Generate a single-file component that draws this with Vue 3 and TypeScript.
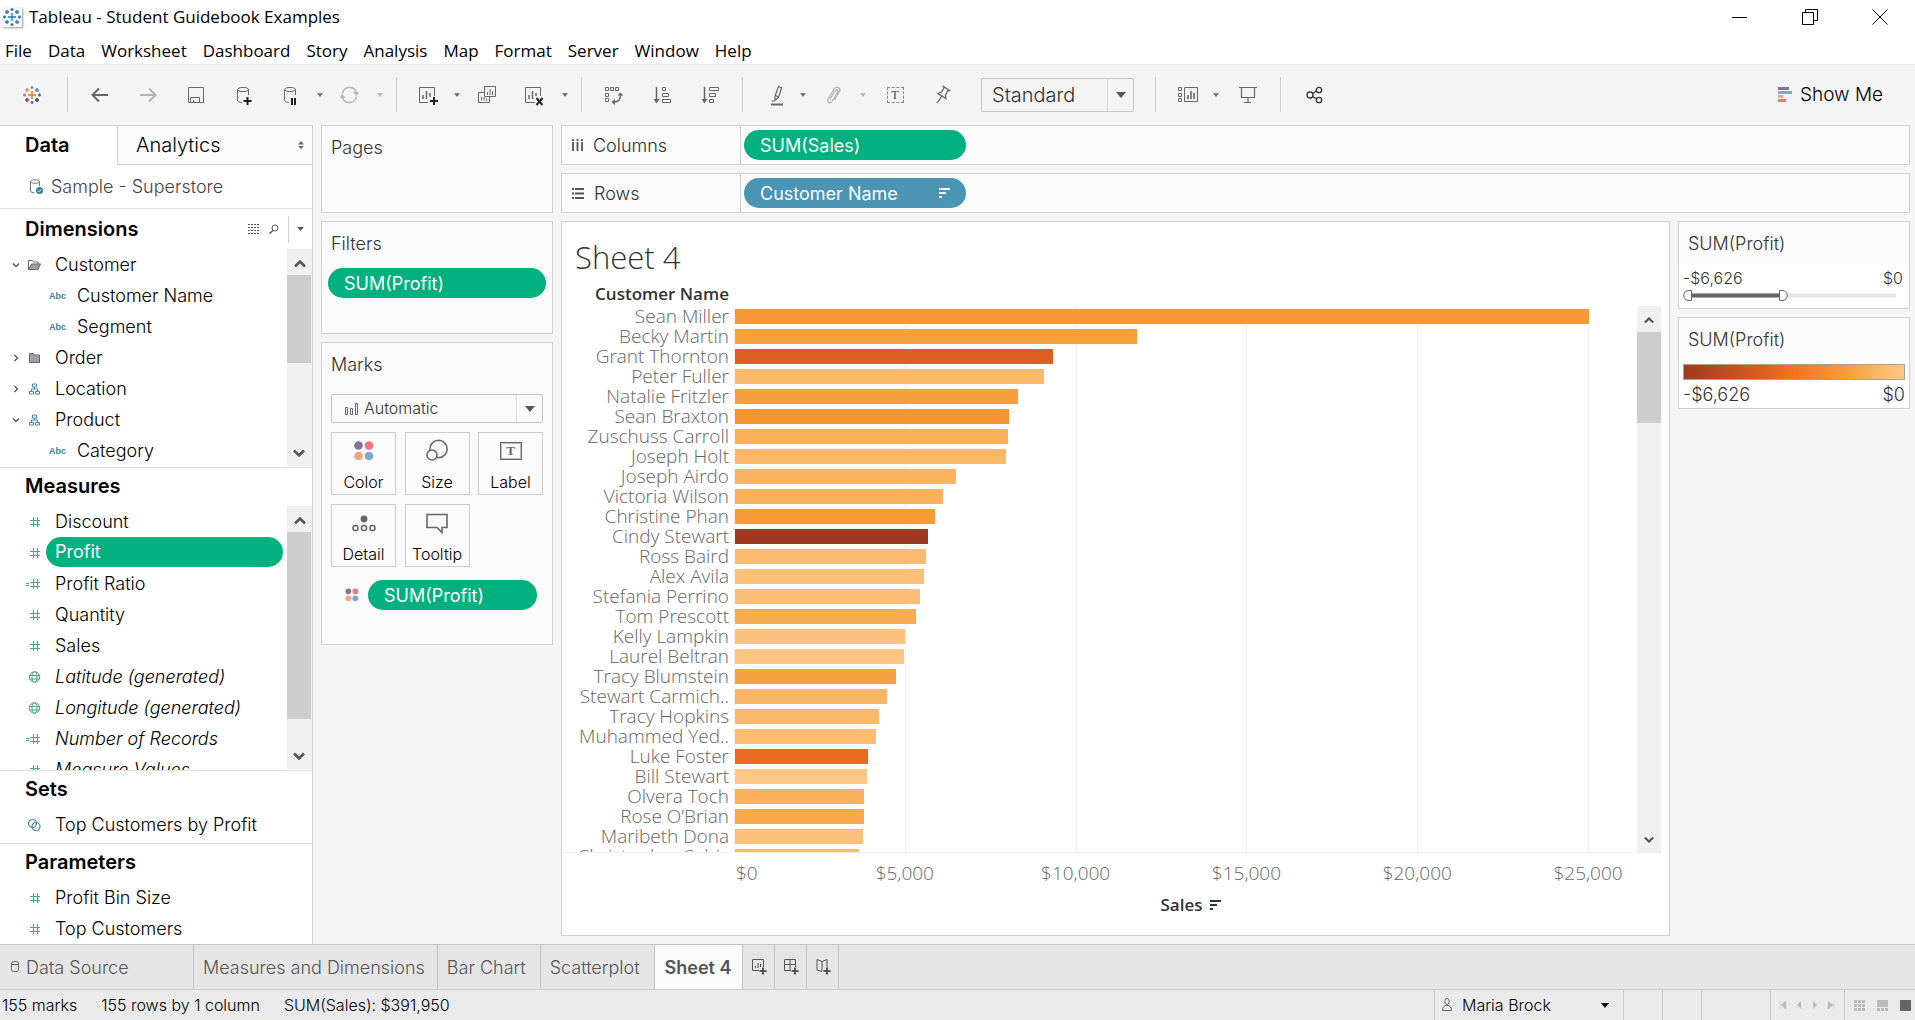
<script setup lang="ts">
import { ref } from 'vue'

interface Field { icon: string; label: string; open?: boolean; group?: boolean; child?: boolean; italic?: boolean; active?: boolean }
interface Row { name: string; sales: number; color: string }
interface Tool { icon?: string; label?: string; kind: 'tool' | 'near' | 'caret' | 'sep'; off?: boolean }

const menus = ['File', 'Data', 'Worksheet', 'Dashboard', 'Story', 'Analysis', 'Map', 'Format', 'Server', 'Window', 'Help']

const toolsLeft: Tool[] = [
  { kind: 'tool', icon: 'back', label: 'Undo' },
  { kind: 'tool', icon: 'forward', label: 'Redo', off: true },
  { kind: 'tool', icon: 'save', label: 'Save' },
  { kind: 'tool', icon: 'newdata', label: 'New data source' },
  { kind: 'near', icon: 'pause', label: 'Pause updates' },
  { kind: 'caret', label: 'Update options' },
  { kind: 'near', icon: 'refresh', label: 'Run update', off: true },
  { kind: 'caret', label: 'Run options', off: true },
  { kind: 'sep' },
  { kind: 'near', icon: 'newsheet', label: 'New worksheet' },
  { kind: 'caret', label: 'New options' },
  { kind: 'near', icon: 'duplicate', label: 'Duplicate' },
  { kind: 'tool', icon: 'clear', label: 'Clear sheet' },
  { kind: 'caret', label: 'Clear options' },
  { kind: 'sep' },
  { kind: 'tool', icon: 'swap', label: 'Swap rows and columns' },
  { kind: 'tool', icon: 'asc', label: 'Sort ascending' },
  { kind: 'tool', icon: 'desc', label: 'Sort descending' },
  { kind: 'sep' },
  { kind: 'near', icon: 'pen', label: 'Highlight' },
  { kind: 'caret', label: 'Highlight options' },
  { kind: 'near', icon: 'clip', label: 'Group members', off: true },
  { kind: 'caret', label: 'Group options', off: true },
  { kind: 'tool', icon: 'labels', label: 'Show mark labels' },
  { kind: 'tool', icon: 'pin', label: 'Fix axes' }
]
const toolsRight: Tool[] = [
  { kind: 'sep' },
  { kind: 'near', icon: 'cards', label: 'Show or hide cards' },
  { kind: 'caret', label: 'Card options' },
  { kind: 'tool', icon: 'present', label: 'Presentation mode' },
  { kind: 'sep' },
  { kind: 'tool', icon: 'share', label: 'Share' }
]

const dimensions: Field[] = [
  { icon: 'folderopen', label: 'Customer', group: true, open: true },
  { icon: 'abc', label: 'Customer Name', child: true },
  { icon: 'abc', label: 'Segment', child: true },
  { icon: 'folder', label: 'Order', group: true },
  { icon: 'tree', label: 'Location', group: true },
  { icon: 'tree', label: 'Product', group: true, open: true },
  { icon: 'abc', label: 'Category', child: true }
]
const measures: Field[] = [
  { icon: 'hash', label: 'Discount' },
  { icon: 'hash', label: 'Profit', active: true },
  { icon: 'calc', label: 'Profit Ratio' },
  { icon: 'hash', label: 'Quantity' },
  { icon: 'hash', label: 'Sales' },
  { icon: 'globe', label: 'Latitude (generated)', italic: true },
  { icon: 'globe', label: 'Longitude (generated)', italic: true },
  { icon: 'calc', label: 'Number of Records', italic: true },
  { icon: 'hash', label: 'Measure Values', italic: true }
]
const parameters: Field[] = [
  { icon: 'hash', label: 'Profit Bin Size' },
  { icon: 'hash', label: 'Top Customers' }
]

const markButtons = [
  { icon: 'm-color', label: 'Color' },
  { icon: 'm-size', label: 'Size' },
  { icon: 'm-label', label: 'Label' },
  { icon: 'm-detail', label: 'Detail' },
  { icon: 'm-tooltip', label: 'Tooltip' }
]

const axisMax = 26315
const ticks = [0, 5000, 10000, 15000, 20000, 25000]
const pct = (v: number): string => `${(v / axisMax) * 100}%`
const money = (v: number): string => `$${v.toLocaleString('en-US')}`

const rows: Row[] = [
  { name: 'Sean Miller', sales: 25020, color: '#f59938' },
  { name: 'Becky Martin', sales: 11770, color: '#f7a13e' },
  { name: 'Grant Thornton', sales: 9310, color: '#dd5f1f' },
  { name: 'Peter Fuller', sales: 9045, color: '#fcba6b' },
  { name: 'Natalie Fritzler', sales: 8285, color: '#f69f3e' },
  { name: 'Sean Braxton', sales: 8020, color: '#f69434' },
  { name: 'Zuschuss Carroll', sales: 7990, color: '#f9b059' },
  { name: 'Joseph Holt', sales: 7932, color: '#fcb868' },
  { name: 'Joseph Airdo', sales: 6470, color: '#f9b460' },
  { name: 'Victoria Wilson', sales: 6090, color: '#f9b05b' },
  { name: 'Christine Phan', sales: 5855, color: '#f69a38' },
  { name: 'Cindy Stewart', sales: 5650, color: '#9e3a22' },
  { name: 'Ross Baird', sales: 5590, color: '#fcbb71' },
  { name: 'Alex Avila', sales: 5532, color: '#fdc07a' },
  { name: 'Stefania Perrino', sales: 5415, color: '#fcbe77' },
  { name: 'Tom Prescott', sales: 5298, color: '#f7ac50' },
  { name: 'Kelly Lampkin', sales: 4976, color: '#fdc27d' },
  { name: 'Laurel Beltran', sales: 4947, color: '#fec583' },
  { name: 'Tracy Blumstein', sales: 4713, color: '#f6a240' },
  { name: 'Stewart Carmich..', sales: 4449, color: '#fbb566' },
  { name: 'Tracy Hopkins', sales: 4215, color: '#fcb96c' },
  { name: 'Muhammed Yed..', sales: 4127, color: '#fdbd73' },
  { name: 'Luke Foster', sales: 3893, color: '#ea6a22' },
  { name: 'Bill Stewart', sales: 3864, color: '#ffc685' },
  { name: 'Olvera Toch', sales: 3776, color: '#fbb05b' },
  { name: 'Rose O’Brian', sales: 3776, color: '#f8a94b' },
  { name: 'Maribeth Dona', sales: 3747, color: '#fdc07b' },
  { name: 'Christopher Sabi..', sales: 3630, color: '#fcbb6f' }
]

const fit = ref('Standard')
const markType = ref('Automatic')
</script>

<template>
  <div class="app">
    <svg class="sprite" width="0" height="0" aria-hidden="true">
      <symbol id="logo-blue" viewBox="0 0 20 20">
        <path d="M10 6v8M6 10h8M10 1v3M8.500 2.500h3M10 16v3M8.500 17.500h3M2.500 8.500v3M1 10h3M17.500 8.500v3M16 10h3M5 3v4M3 5h4M15 3v4M13 5h4M5 13v4M3 15h4M15 13v4M13 15h4" fill="none" stroke="#2478ae" stroke-width="1.300" />
      </symbol>
      <symbol id="logo" viewBox="0 0 20 20">
        <g fill="none" stroke-width="1.500">
          <path d="M10 6v8M6 10h8" stroke="#e8762d" />
          <path d="M10 1v3M8.500 2.500h3M2.500 8.500v3M1 10h3" stroke="#7099a6" />
          <path d="M10 16v3M8.500 17.500h3M17.500 8.500v3M16 10h3" stroke="#5b6591" />
          <path d="M5 3v4M3 5h4" stroke="#eb912c" />
          <path d="M15 3v4M13 5h4" stroke="#59879b" />
          <path d="M5 13v4M3 15h4" stroke="#c72035" />
          <path d="M15 13v4M13 15h4" stroke="#1f447e" />
        </g>
      </symbol>
      <symbol id="back" viewBox="0 0 24 24"><path d="M11 5.500 4.500 12l6.500 6.500M5 12h15" fill="none" stroke="currentColor" stroke-width="2" /></symbol>
      <symbol id="forward" viewBox="0 0 24 24"><path d="M13 5.500 19.500 12 13 18.500M19 12H4" fill="none" stroke="currentColor" stroke-width="2" /></symbol>
      <symbol id="save" viewBox="0 0 24 24"><path d="M4.500 4.500h15v15h-15zM6.500 19v-4.500h9V19M9.500 19v-2" fill="none" stroke="currentColor" /></symbol>
      <symbol id="newdata" viewBox="0 0 24 24">
        <path d="M5.500 6.500c0-2.700 11-2.700 11 0s-11 2.700-11 0zV17c0 1.300 2 2.500 4.500 2.500M16.500 6.500V12" fill="none" stroke="currentColor" />
        <path d="M15.500 14v8M11.500 18h8" stroke="#222" stroke-width="2" />
      </symbol>
      <symbol id="pause" viewBox="0 0 24 24">
        <path d="M6.500 6.500c0-2.700 11-2.700 11 0s-11 2.700-11 0zV17c0 1.300 2 2.500 4.500 2.500M17.500 6.500V12" fill="none" stroke="currentColor" />
        <path d="M14 15v7M17 15v7" stroke="#222" stroke-width="2" />
      </symbol>
      <symbol id="refresh" viewBox="0 0 24 24">
        <path d="M4.500 10.500A7.200 7.200 0 0 1 18.500 9.500M18.500 13.500A7.200 7.200 0 0 1 4.500 14.500" fill="none" stroke="currentColor" stroke-width="1.500" />
        <path d="M15 9h6l-2 4zM8 15H2l2-4z" fill="currentColor" />
      </symbol>
      <symbol id="newsheet" viewBox="0 0 24 24">
        <path d="M13 19.500H4.500v-15h15V13" fill="none" stroke="currentColor" />
        <path d="M8 16v-4M11.500 16V8M15 14v-4" stroke="currentColor" stroke-width="1.500" />
        <path d="M19 14v8M15 18h8" stroke="#222" stroke-width="2" />
      </symbol>
      <symbol id="clear" viewBox="0 0 24 24">
        <path d="M14 19.500H4.500v-15h15V13" fill="none" stroke="currentColor" />
        <path d="M8 16v-4M11.500 16V8M15 13v-3" stroke="currentColor" stroke-width="1.500" />
        <path d="M15.500 15 21.500 22M21.500 15 15.500 22" stroke="#222" stroke-width="2" />
      </symbol>
      <symbol id="duplicate" viewBox="0 0 24 24">
        <path d="M9.500 3.500h11v10h-11zM9 9.500H3.500v10h11V14M12.500 12V9M15 12V6M17.500 12V8M6.500 17.500v-3.500M9 17.500V14M11.500 17.500v-2" fill="none" stroke="currentColor" />
      </symbol>
      <symbol id="swap" viewBox="0 0 24 24">
        <path d="M3.500 4.500h3v3h-3zM8.500 4.500h3v3h-3zM13.500 4.500h3v3h-3zM3.500 10.500h3v3h-3zM3.500 15.500h3v3h-3z" fill="none" stroke="currentColor" />
        <path d="M12 19c4.500 0 6.500-2 6.500-7" fill="none" stroke="currentColor" stroke-width="1.500" />
        <path d="M15.500 12.500l3-3 3 3zM13 16l-3.500 3 3.500 3z" fill="currentColor" />
      </symbol>
      <symbol id="asc" viewBox="0 0 24 24">
        <path d="M6.500 4v14" stroke="currentColor" stroke-width="1.500" /><path d="M3.500 16h6l-3 4.500z" fill="currentColor" />
        <path d="M12.500 4.500h3v3h-3zM12.500 10.500h6v3h-6zM12.500 16.500h8v3h-8z" fill="none" stroke="currentColor" />
      </symbol>
      <symbol id="desc" viewBox="0 0 24 24">
        <path d="M6.500 4v14" stroke="currentColor" stroke-width="1.500" /><path d="M3.500 16h6l-3 4.500z" fill="currentColor" />
        <path d="M11.500 4.500h9v3h-9zM11.500 10.500h6v3h-6zM11.500 16.500h4v3h-4z" fill="none" stroke="currentColor" />
      </symbol>
      <symbol id="pen" viewBox="0 0 24 24">
        <path d="M17.500 3.500l3 1.500-3 9.500-3.500 3v-4.500zM14.500 12.500l3 1.500" fill="none" stroke="currentColor" stroke-width="1.200" />
        <path d="M10 21.500h12" stroke="currentColor" stroke-width="2" /><path d="M10.500 18h3" stroke="currentColor" />
      </symbol>
      <symbol id="clip" viewBox="0 0 24 24"><path d="M9 16l5.500-8.500c1-1.500 3.200 0 2.300 1.500L11 18.500C9.500 21 5.500 19 7 16l6.500-10.500c2-3 7-.500 5 3L13.500 17" fill="none" stroke="currentColor" stroke-width="1.300" /></symbol>
      <symbol id="pin" viewBox="0 0 24 24"><path d="M12.500 3.500l6 4-2 .5-2 4 .5 3.500-8-5 3.500-1.500 2.500-4zM10.500 13.500 6 20" fill="none" stroke="currentColor" stroke-width="1.300" /></symbol>
      <symbol id="cards" viewBox="0 0 24 24">
        <path d="M4.500 4.500h3v3h-3zM4.500 10.500h3v3h-3zM4.500 15.500h3v3h-3zM10.500 4.500h13v14h-13z" fill="none" stroke="currentColor" />
        <path d="M14 16v-4M17 16V8M20 16v-6" stroke="currentColor" stroke-width="1.600" />
      </symbol>
      <symbol id="present" viewBox="0 0 24 24"><path d="M3 4.500h18M5.500 4.500v10h13v-10M12 15v5M8 19.500h7" fill="none" stroke="currentColor" stroke-width="1.200" /></symbol>
      <symbol id="share" viewBox="0 0 24 24"><g fill="none" stroke="#333" stroke-width="1.300"><circle cx="9" cy="12" r="3" /><circle cx="18" cy="7" r="2.700" /><circle cx="18" cy="17" r="2.700" /><path d="M11.600 10.500 15.500 8.300M11.600 13.500l3.900 2.300" /></g></symbol>
      <symbol id="hash" viewBox="0 0 16 16"><path d="M8.500 3v10M12.500 3v10M5 6.500h10M5 10.500h10" stroke="#4ba584" /></symbol>
      <symbol id="calc" viewBox="0 0 16 16"><path d="M8.500 3v10M12.500 3v10M5 6.500h10M5 10.500h10M1 7.500h3M1 9.500h3" stroke="#4ba584" /></symbol>
      <symbol id="globe" viewBox="0 0 16 16"><g fill="none" stroke="#4ba584"><circle cx="9.500" cy="8" r="5.200" /><ellipse cx="9.500" cy="8" rx="2.500" ry="5.200" /><path d="M4.500 6.500h10M4.500 10h10" /></g></symbol>
      <symbol id="folder" viewBox="0 0 16 16"><path d="M4.500 12.500v-9h4l1 1.500h5v7.500z" fill="#9aa1ab" stroke="#666" /></symbol>
      <symbol id="folderopen" viewBox="0 0 16 16"><path d="M3.500 12.500v-9h4l1 1.500h4.500v2" fill="none" stroke="#666" /><path d="M3.500 12.500l3-5.500h9l-2.500 5.500z" fill="#9aa1ab" stroke="#666" /></symbol>
      <symbol id="tree" viewBox="0 0 16 16"><path d="M7.500 3h4v3h-4zM4.500 10.500h4v2.500h-4zM10.500 10.500h4v2.500h-4zM9.500 6v2M6.500 10V8h6v2" fill="none" stroke="#4a87a3" /></symbol>
      <symbol id="set" viewBox="0 0 16 16"><g fill="none" stroke="#4a87a3" stroke-width="1.200"><circle cx="7.500" cy="6.500" r="4" /><circle cx="11" cy="9.500" r="4" /></g></symbol>
      <symbol id="source" viewBox="0 0 16 18"><path d="M2.500 3.500c0-2.400 9-2.400 9 0s-9 2.400-9 0zV13c0 1 2 1.800 4 1.800M11.500 3.500V8" fill="none" stroke="#777" /><circle cx="11.500" cy="12.500" r="3.500" fill="#3e7f9e" /><path d="M10 12.500l1.200 1.200 2-2.200" fill="none" stroke="#fff" /></symbol>
      <symbol id="cyl" viewBox="0 0 10 14"><rect x="1.500" y="1.500" width="7" height="10" rx="2" fill="none" stroke="#666" /><path d="M1.500 4.500h7" stroke="#666" /></symbol>
      <symbol id="down" viewBox="0 0 10 6"><path d="M0 0h10L5 6z" fill="currentColor" /></symbol>
      <symbol id="chev" viewBox="0 0 12 8"><path d="M1 6.500 6 1.500l5 5" fill="none" stroke="currentColor" stroke-width="2.600" /></symbol>
      <symbol id="twist" viewBox="0 0 8 8"><path d="M2.500 1 5.500 4l-3 3" fill="none" stroke="#555" stroke-width="1.400" /></symbol>
      <symbol id="grid" viewBox="0 0 12 10"><path d="M0 .5h12M0 3.500h12M0 6.500h12M0 9.500h12" stroke="#555" stroke-dasharray="2 1" /></symbol>
      <symbol id="find" viewBox="0 0 10 10"><circle cx="6" cy="4" r="3" fill="none" stroke="#555" /><path d="M4 6.500.5 9.500" stroke="#555" stroke-width="1.500" /></symbol>
      <symbol id="sorted" viewBox="0 0 11 10"><path d="M0 1h11M0 5h7M0 9h3" stroke="currentColor" stroke-width="2" /></symbol>
      <symbol id="columns" viewBox="0 0 11 12"><path d="M1 0v2M5.500 0v2M10 0v2M1 3v9M5.500 3v9M10 3v9" stroke="#555" stroke-width="1.800" /></symbol>
      <symbol id="rows" viewBox="0 0 12 11"><path d="M0 1h2M0 5.500h2M0 10h2M3 1h9M3 5.500h9M3 10h9" stroke="#555" stroke-width="1.800" /></symbol>
      <symbol id="bars" viewBox="0 0 14 12"><path d="M.5 4.500h2v7h-2zM5.500 5.500h2v6h-2zM10.500.5h2v11h-2z" fill="none" stroke="#666" /></symbol>
      <symbol id="m-color" viewBox="0 0 24 24"><circle cx="6.500" cy="6.500" r="4.300" fill="#83719a" /><circle cx="17" cy="6.500" r="4.300" fill="#f76f82" /><circle cx="6.500" cy="17" r="4.300" fill="#f2a67c" /><circle cx="17" cy="17" r="4.300" fill="#82a5ce" /></symbol>
      <symbol id="m-size" viewBox="0 0 24 24"><g fill="#fafafa" stroke="#666" stroke-width="1.500"><circle cx="13.500" cy="10" r="8.700" /><circle cx="7" cy="16" r="5" /></g></symbol>
      <symbol id="m-detail" viewBox="0 0 24 24"><circle cx="12" cy="8" r="3.400" fill="#666" /><g fill="none" stroke="#666" stroke-width="1.500"><circle cx="3.500" cy="17" r="2.600" /><circle cx="12" cy="17" r="2.600" /><circle cx="20.500" cy="17" r="2.600" /></g></symbol>
      <symbol id="m-tooltip" viewBox="0 0 24 24"><path d="M2 3.500h20v13h-5v5l-5-5H2z" fill="none" stroke="#666" stroke-width="1.600" /></symbol>
      <symbol id="addsheet" viewBox="0 0 18 18"><path d="M9 12.500H2.500v-11h11V9M5.500 10V8M8 10V5M10.500 9V6" fill="none" stroke="#555" /><path d="M13 9.500v7M9.500 13h7" stroke="#555" stroke-width="2" /></symbol>
      <symbol id="adddash" viewBox="0 0 18 18"><path d="M9 12.500H2.500v-11h11V9M2.500 6.500h11M8 1.500v11" fill="none" stroke="#555" /><path d="M13 9.500v7M9.500 13h7" stroke="#555" stroke-width="2" /></symbol>
      <symbol id="addstory" viewBox="0 0 18 18"><path d="M8 13.500l-5-1.500v-10.500L8 3.500l5-2V9M8 3.500V13" fill="none" stroke="#555" /><path d="M13 9.500v7M9.500 13h7" stroke="#555" stroke-width="2" /></symbol>
      <symbol id="person" viewBox="0 0 12 14"><g fill="none" stroke="#666"><ellipse cx="6" cy="3.500" rx="2.200" ry="3" /><path d="M1.500 12.500c0-7 9-7 9 0z" /></g></symbol>
    </svg>

    <header class="titlebar">
      <svg class="appicon"><use href="#logo-blue" /></svg>
      <h1>Tableau - Student Guidebook Examples</h1>
      <div class="winbtns">
        <button aria-label="Minimize"><svg width="16" height="16"><path d="M0 8.500h15" stroke="#000" /></svg></button>
        <button aria-label="Restore"><svg width="16" height="16"><path d="M.5 3.500h11v12H.5zM3.500 3V.5h12v11H12" fill="none" stroke="#000" /></svg></button>
        <button aria-label="Close"><svg width="16" height="16"><path d="M.5.500l15 15M15.500.500l-15 15" stroke="#000" /></svg></button>
      </div>
    </header>

    <nav class="menubar"><button v-for="m in menus" :key="m">{{ m }}</button></nav>

    <div class="toolbar">
      <button class="tool home" aria-label="Start page"><svg width="20" height="20"><use href="#logo" /></svg></button>
      <span class="sep first"></span>
      <template v-for="(t, i) in toolsLeft" :key="i">
        <span v-if="t.kind === 'sep'" class="sep"></span>
        <button v-else :class="[t.kind, { off: t.off }]" :aria-label="t.label">
          <span v-if="t.icon === 'labels'" class="tbox">T</span>
          <svg v-else-if="t.icon" width="24" height="24"><use :href="'#' + t.icon" /></svg>
          <svg v-else width="6" height="4"><use href="#down" /></svg>
        </button>
      </template>
      <div class="combo fit">
        <select v-model="fit" aria-label="Fit"><option>Standard</option><option>Fit Width</option><option>Entire View</option></select>
        <span class="arrow"><svg width="10" height="6"><use href="#down" /></svg></span>
      </div>
      <template v-for="(t, i) in toolsRight" :key="i">
        <span v-if="t.kind === 'sep'" class="sep"></span>
        <button v-else :class="t.kind" :aria-label="t.label">
          <svg v-if="t.icon" width="24" height="24"><use :href="'#' + t.icon" /></svg>
          <svg v-else width="6" height="4"><use href="#down" /></svg>
        </button>
      </template>
      <button class="showme">
        <svg width="14" height="16"><path d="M0 1.500h11" stroke="#83719a" stroke-width="3" /><path d="M0 5.500h14" stroke="#82a5ce" stroke-width="3" /><path d="M0 9.500h5" stroke="#f2a67c" stroke-width="3" /><path d="M0 13.500h8" stroke="#f76f82" stroke-width="3" /></svg>
        Show Me
      </button>
    </div>

    <div class="body">
      <aside class="side">
        <div class="sidetabs">
          <button class="on">Data</button>
          <button class="off">Analytics<svg width="6" height="8"><path d="M0 3.500h6L3 0zM0 5h6L3 8z" fill="#667" /></svg></button>
        </div>
        <div class="datasource"><svg width="16" height="18"><use href="#source" /></svg>Sample - Superstore</div>

        <section class="dims">
          <header>
            <h2>Dimensions</h2>
            <button aria-label="View data"><svg width="12" height="10"><use href="#grid" /></svg></button>
            <button aria-label="Find field"><svg width="10" height="10"><use href="#find" /></svg></button>
            <button class="more" aria-label="Data pane menu"><svg width="7" height="4"><use href="#down" /></svg></button>
          </header>
          <div class="scroller">
            <ul>
              <li v-for="f in dimensions" :key="f.label" :class="{ child: f.child }">
                <svg v-if="f.group" class="twist" :class="{ open: f.open }" width="8" height="8"><use href="#twist" /></svg>
                <span v-if="f.icon === 'abc'" class="abc">Abc</span>
                <svg v-else class="ficon" width="16" height="16"><use :href="'#' + f.icon" /></svg>
                <span class="fname">{{ f.label }}</span>
              </li>
            </ul>
            <div class="sbar">
              <button aria-label="Scroll up"><svg width="12" height="8"><use href="#chev" /></svg></button>
              <i class="thumb short"></i>
              <button class="dn" aria-label="Scroll down"><svg width="12" height="8"><use href="#chev" /></svg></button>
            </div>
          </div>
        </section>

        <section class="meas">
          <header><h2>Measures</h2></header>
          <div class="scroller">
            <ul>
              <li v-for="f in measures" :key="f.label" :class="{ italic: f.italic, active: f.active }">
                <svg class="ficon" width="16" height="16"><use :href="'#' + f.icon" /></svg>
                <span class="fname">{{ f.label }}</span>
              </li>
            </ul>
            <div class="sbar">
              <button aria-label="Scroll up"><svg width="12" height="8"><use href="#chev" /></svg></button>
              <i class="thumb long"></i>
              <button class="dn" aria-label="Scroll down"><svg width="12" height="8"><use href="#chev" /></svg></button>
            </div>
          </div>
        </section>

        <section class="sets">
          <header><h2>Sets</h2></header>
          <ul><li><svg class="ficon" width="16" height="16"><use href="#set" /></svg><span class="fname">Top Customers by Profit</span></li></ul>
        </section>

        <section class="params">
          <header><h2>Parameters</h2></header>
          <ul>
            <li v-for="f in parameters" :key="f.label"><svg class="ficon" width="16" height="16"><use :href="'#' + f.icon" /></svg><span class="fname">{{ f.label }}</span></li>
          </ul>
        </section>
      </aside>

      <div class="cards">
        <section class="card pages"><h3>Pages</h3></section>
        <section class="card filters">
          <h3>Filters</h3>
          <button class="pill green">SUM(Profit)</button>
        </section>
        <section class="card marks">
          <h3>Marks</h3>
          <div class="combo type">
            <svg class="bars" width="14" height="12"><use href="#bars" /></svg>
            <select v-model="markType" aria-label="Mark type"><option>Automatic</option><option>Bar</option><option>Line</option></select>
            <span class="arrow"><svg width="10" height="6"><use href="#down" /></svg></span>
          </div>
          <div class="markgrid">
            <button v-for="b in markButtons" :key="b.label">
              <span v-if="b.icon === 'm-label'" class="tbox solid">T</span>
              <svg v-else width="24" height="24"><use :href="'#' + b.icon" /></svg>
              <span>{{ b.label }}</span>
            </button>
          </div>
          <div class="encoded">
            <svg width="16" height="16"><use href="#m-color" /></svg>
            <button class="pill green">SUM(Profit)</button>
          </div>
        </section>
      </div>

      <main class="work">
        <div class="shelf">
          <span class="shelfname"><svg width="11" height="12"><use href="#columns" /></svg>Columns</span>
          <button class="pill green">SUM(Sales)</button>
        </div>
        <div class="shelf">
          <span class="shelfname"><svg width="12" height="11"><use href="#rows" /></svg>Rows</span>
          <button class="pill blue">Customer Name<svg width="11" height="10"><use href="#sorted" /></svg></button>
        </div>

        <div class="stage">
          <section class="viz">
            <h2>Sheet 4</h2>
            <div class="colhead">Customer Name</div>
            <div class="plotarea">
              <div class="chart">
                <div class="labels"><div v-for="r in rows" :key="r.name">{{ r.name }}</div></div>
                <div class="plot">
                  <i v-for="t in ticks" :key="t" class="gridline" :style="{ left: pct(t) }"></i>
                  <div v-for="r in rows" :key="r.name" class="track"><div class="bar" :style="{ width: pct(r.sales), background: r.color }"></div></div>
                </div>
              </div>
              <div class="sbar">
                <button aria-label="Scroll up"><svg width="10" height="7"><use href="#chev" /></svg></button>
                <i class="thumb mid"></i>
                <button class="dn" aria-label="Scroll down"><svg width="10" height="7"><use href="#chev" /></svg></button>
              </div>
            </div>
            <div class="axis">
              <span v-for="t in ticks" :key="t" class="tick" :class="{ zero: t === 0 }" :style="{ left: pct(t) }">{{ money(t) }}</span>
            </div>
            <div class="axistitle">Sales<svg width="11" height="10"><use href="#sorted" /></svg></div>
          </section>

          <div class="legends">
            <section class="card legend">
              <h3>SUM(Profit)</h3>
              <div class="range">
                <div class="ends small"><span>-$6,626</span><span>$0</span></div>
                <svg class="slider" height="12" width="213" role="img" aria-label="Profit range">
                  <path d="M8 5.500h205" stroke="#e4e4e4" stroke-width="4" /><path d="M8 5.500h88" stroke="#666" stroke-width="4" />
                  <path d="M8.500 .5v10H6c-7 0-7-10 0-10zM96.500 .5v10h2.500c7 0 7-10 0-10z" fill="#fff" stroke="#666" />
                </svg>
              </div>
            </section>
            <section class="card legend">
              <h3>SUM(Profit)</h3>
              <div class="ramp">
                <div class="gradient"></div>
                <div class="ends"><span>-$6,626</span><span>$0</span></div>
              </div>
            </section>
          </div>
        </div>
      </main>
    </div>

    <nav class="tabs">
      <button class="src"><svg width="10" height="14"><use href="#cyl" /></svg>Data Source</button>
      <button class="wide">Measures and Dimensions</button>
      <button>Bar Chart</button>
      <button>Scatterplot</button>
      <button class="current">Sheet 4</button>
      <button class="add" aria-label="New worksheet"><svg width="18" height="18"><use href="#addsheet" /></svg></button>
      <button class="add" aria-label="New dashboard"><svg width="18" height="18"><use href="#adddash" /></svg></button>
      <button class="add" aria-label="New story"><svg width="18" height="18"><use href="#addstory" /></svg></button>
    </nav>

    <footer class="status">
      <span>155 marks</span><span>155 rows by 1 column</span><span>SUM(Sales): $391,950</span>
      <div class="cells">
        <button class="user"><svg width="12" height="14"><use href="#person" /></svg>Maria Brock<svg class="uc" width="8" height="5"><use href="#down" /></svg></button>
        <i class="c1"></i><i class="c1"></i><i class="c2"></i>
        <div class="nav">
          <button aria-label="First sheet"><svg width="8" height="8"><path d="M1 0v8M7 0v8L2 4z" fill="#bbb" stroke="#bbb" stroke-width=".5" /></svg></button>
          <button aria-label="Previous sheet"><svg width="8" height="8"><path d="M6 0v8L2 4z" fill="#bbb" /></svg></button>
          <button aria-label="Next sheet"><svg width="8" height="8"><path d="M2 0v8l4-4z" fill="#bbb" /></svg></button>
          <button aria-label="Last sheet"><svg width="8" height="8"><path d="M7 0v8M1 0v8l5-4z" fill="#bbb" stroke="#bbb" stroke-width=".5" /></svg></button>
        </div>
        <div class="views">
          <button aria-label="Sheet sorter"><svg width="11" height="11"><path d="M1.500 0v11M5.500 0v11M9.500 0v11" stroke="#bbb" stroke-width="3" stroke-dasharray="3 1" /></svg></button>
          <button aria-label="Filmstrip"><svg width="11" height="11"><path d="M0 0h11v7H0zM0 8h3v3H0zM4 8h3v3H4zM8 8h3v3H8z" fill="#bbb" /></svg></button>
          <button aria-label="Tabs"><svg width="11" height="11"><path d="M0 0h11v11H0z" fill="#666" /></svg></button>
        </div>
      </div>
    </footer>
  </div>
</template>

<style>
body { margin: 0; background: #f4f4f4; }
</style>

<style scoped>
* { box-sizing: border-box; }
.app { display: flex; flex-direction: column; height: 100vh; min-height: 900px; font-family: Inter, Roboto, sans-serif; font-weight: 300; font-size: 18px; color: #000; overflow: hidden; }
.sprite { position: absolute; }
button { border: 0; padding: 0; margin: 0; background: none; font: inherit; color: inherit; display: flex; align-items: center; white-space: nowrap; }
svg { flex: none; display: block; }
h1, h2, h3, ul { margin: 0; padding: 0; list-style: none; font-size: 18px; font-weight: 300; }

.titlebar { display: flex; align-items: center; height: 34px; background: #fff; padding-left: 2px; font-family: "Open Sans", sans-serif; }
.titlebar h1 { font-size: 17px; font-weight: 400; margin: 0 0 1px 7px; }
.appicon { width: 20px; height: 20px; background: #f6f6f6; box-shadow: 1px 1px 2px #999; }
.winbtns { display: flex; margin-left: auto; }
.winbtns button { width: 70px; height: 34px; justify-content: center; }
.menubar { display: flex; height: 30px; background: #fff; padding: 2px 5px 0; gap: 16px; font-family: "Open Sans", sans-serif; font-weight: 400; font-size: 17px; align-items: center; }

.toolbar { display: flex; align-items: center; height: 61px; padding-bottom: 1px; border-top: 1px solid #ececec; background: #f4f4f4; color: #666; }
.toolbar button { justify-content: center; height: 40px; }
.toolbar .tool { width: 48px; }
.toolbar .near { width: 44px; }
.toolbar .caret { width: 16px; }
.toolbar .off { color: #b4b4b4; }
.toolbar .home { margin-left: 8px; }
.sep { width: 1px; height: 35px; background: #ccc; margin: 0 8px; }
.sep.first { margin-left: 11px; }
.tbox { width: 17px; height: 16px; border: 1px dashed #888; font-family: "Liberation Serif", serif; font-size: 12px; line-height: 14px; font-weight: 400; text-align: center; color: #444; }
.tbox.solid { width: 22px; height: 18px; margin-bottom: 3px; border: 1px solid #666; outline: 1px solid #bbb; outline-offset: -2px; font-size: 13px; line-height: 16px; font-weight: 700; color: #666; }
.combo { position: relative; display: flex; align-items: center; border: 1px solid #c6c6c6; border-radius: 2px; background: #fafafa; }
.combo select { appearance: none; flex: 1; border: 0; background: transparent; font: inherit; color: #333; height: 100%; padding: 0 0 0 10px; outline: 0; }
.combo .arrow { display: flex; align-items: center; justify-content: center; width: 26px; height: 100%; border-left: 1px solid #dcdcdc; color: #555; }
.fit { width: 153px; height: 34px; margin: 0 13px 0 14px; font-size: 20px; background: #f4f4f4; }
.toolbar .showme { margin-left: auto; margin-right: 32px; gap: 8px; font-size: 19px; color: #000; }

.body { display: flex; flex: 1; min-height: 0; }
.side { width: 313px; flex: none; background: #fff; border-right: 1px solid #d0d0d0; display: flex; flex-direction: column; }
.sidetabs { display: flex; height: 40px; font-size: 20px; }
.sidetabs .on { width: 117px; padding: 0 0 2px 25px; border-top: 1px solid #d0d0d0; font-weight: 600; }
.sidetabs .off { flex: 1; padding: 0 8px 0 18px; justify-content: space-between; background: #fafafa; border: 1px solid #d0d0d0; border-right: 0; }
.datasource { display: flex; align-items: center; height: 44px; padding: 0 0 0 28px; gap: 7px; color: #444; border-bottom: 1px solid #e2e2e2; }
.side section { display: flex; flex-direction: column; border-bottom: 1px solid #e2e2e2; }
.side section header { display: flex; align-items: center; height: 38px; padding-left: 25px; flex: none; }
.side h2 { font-size: 20px; font-weight: 600; margin-bottom: 2px; }
.side .dims { flex: 258 1 0; min-height: 0; }
.side .meas { flex: 302 1 0; min-height: 0; }
.side .dims header { height: 40px; }
.dims header h2 { margin: 0 auto 0 0; }
.dims header button { margin-right: 9px; }
.dims header .more { border-left: 1px solid #d0d0d0; height: 27px; width: 24px; justify-content: center; margin: 0; color: #555; }
.side .sets { padding-bottom: 3px; }
.side .params { border-bottom: 0; }
.scroller { display: flex; flex: 1; min-height: 0; }
.scroller ul { flex: 1; overflow: hidden; }
.side li { display: flex; align-items: center; height: 31px; padding-left: 25px; gap: 5px; position: relative; }
.side li.child { padding-left: 49px; gap: 8px; }
.twist { position: absolute; left: 12px; }
.twist.open { transform: rotate(90deg); }
.abc { font-family: "Liberation Sans", sans-serif; font-size: 9px; font-weight: 700; color: #3e8299; width: 20px; }
.fname { padding-left: 9px; }
.side li.child .fname { padding: 0; }
.side li.italic .fname { font-style: italic; }
.side li.active .fname { flex: 1; margin: 0 4px 1px 0; line-height: 30px; border-radius: 15px; background: #00b180; color: #fff; font-weight: 400; }
.sbar { width: 25px; background: #f0f0f0; display: flex; flex-direction: column; color: #555; margin-bottom: 1px; flex: none; }
.sbar button { height: 26px; justify-content: center; padding-top: 3px; flex: none; }
.sbar .dn { transform: rotate(180deg); margin-top: auto; padding: 0; }
.thumb { background: #cdcdcd; width: 24px; }
.thumb.short { height: 88px; }
.thumb.long { height: 187px; }
.thumb.mid { height: 91px; }

.cards { width: 232px; flex: none; margin-left: 8px; display: flex; flex-direction: column; gap: 8px; }
.card { border: 1px solid #d0d0d0; background: #fafafa; }
.card h3 { padding: 0 9px; line-height: 43px; height: 42px; color: #333; }
.pages { height: 88px; }
.filters { height: 113px; padding: 0 6px; }
.filters h3 { padding: 0 3px; }
.filters .pill { width: 100%; margin-top: 4px; }
.pill { height: 30px; border-radius: 15px; color: #fff; font-weight: 400; padding: 0 16px; }
.pill.green { background: #00b180; }
.pill.blue { background: #4995b3; justify-content: space-between; }
.marks { height: 303px; padding: 0 9px; }
.marks h3 { padding: 0; height: 51px; }
.type { height: 29px; font-size: 16px; padding-left: 13px; }
.type select { padding: 0 0 1px 5px; }
.markgrid { display: grid; grid-template-columns: repeat(3, 65px); justify-content: space-between; gap: 9px 0; margin-top: 9px; }
.markgrid button { flex-direction: column; height: 63px; border: 1px solid #ccc; justify-content: flex-end; gap: 7px; font-size: 16px; line-height: 24px; }
.encoded { display: flex; align-items: center; gap: 8px; margin: 13px 6px 0 13px; }
.encoded .pill { flex: 1; }

.work { flex: 1; min-width: 0; margin: 0 5px 8px 8px; display: flex; flex-direction: column; gap: 8px; }
.shelf { display: flex; align-items: center; height: 40px; border: 1px solid #d0d0d0; background: #fafafa; flex: none; }
.shelfname { display: flex; align-items: center; gap: 10px; width: 179px; height: 100%; border-right: 1px solid #d0d0d0; padding-left: 10px; color: #333; }
.shelf .pill { width: 222px; margin-left: 3px; }
.stage { display: flex; flex: 1; min-height: 0; gap: 8px; }
.viz { flex: 1; min-width: 0; background: #fff; border: 1px solid #d0d0d0; display: flex; flex-direction: column; font-family: "Open Sans", sans-serif; padding: 0 8px 0 0; }
.viz h2 { font-size: 31px; line-height: 40px; margin: 15px 0 0 13px; color: #333; }
.colhead { width: 167px; text-align: right; font-weight: 600; font-size: 17px; line-height: 24px; margin-top: 5px; color: #333; }
.plotarea { display: flex; flex: 1; min-height: 0; }
.chart { display: flex; flex: 1; min-width: 0; overflow: hidden; border-bottom: 1px solid #f0f0f0; margin-right: 4px; }
.labels { width: 172px; padding-right: 5px; color: #666; font-size: 19px; text-align: right; line-height: 20px; flex: none; white-space: nowrap; }
.plot { position: relative; flex: 1; }
.gridline { position: absolute; top: 0; bottom: 0; width: 1px; background: #f0f0f0; }
.track { height: 20px; display: flex; padding: 3px 0 2px 1px; position: relative; }
.bar { height: 15px; }
.axis { position: relative; height: 40px; margin: 0 28px 0 172px; color: #666; font-size: 19px; line-height: 24px; flex: none; }
.tick { position: absolute; top: 8px; transform: translateX(-50%); }
.tick.zero { transform: none; margin-left: 2px; }
.axistitle { display: flex; align-items: center; justify-content: center; gap: 7px; font-size: 17px; font-weight: 600; color: #333; line-height: 24px; margin: 0 28px 18px 172px; padding-left: 14px; flex: none; }
.plotarea .sbar { width: 24px; margin: 0; }

.legends { width: 232px; display: flex; flex-direction: column; gap: 8px; }
.legend { background: #fff; }
.legend h3 { background: #fafafa; }
.range { height: 44px; padding: 4px 6px 0 4px; }
.ends { display: flex; justify-content: space-between; line-height: 20px; color: #333; }
.ends.small { font-size: 16px; }
.slider { margin-top: 2px; }
.ramp { height: 48px; padding: 4px 4px 0; }
.gradient { height: 16px; border: 1px solid #a9a48c; background: linear-gradient(90deg, #9e3a22, #dd5c1f 35%, #f26f20 48%, #f7a13e 76%, #fbb768 88%, #ffc685); }
.ramp .ends { margin-top: 5px; }

.tabs { display: flex; height: 46px; flex: none; border-top: 1px solid #c4c4c4; border-bottom: 1px solid #ccc; background: #e5e5e5; color: #555; }
.tabs button { padding: 0 14px 0 9px; border-right: 1px solid #c4c4c4; }
.tabs .src { width: 194px; gap: 6px; padding-left: 10px; }
.tabs .wide { padding-right: 12px; }
.tabs .current { background: #fafafa; font-weight: 600; padding: 0 11px 0 10px; }
.tabs .add { width: 32px; padding: 0 0 0 7px; }
.status { display: flex; height: 30px; flex: none; align-items: center; background: #eaeaea; font-size: 16px; gap: 24px; padding-left: 2px; }
.cells { margin-left: auto; display: flex; height: 100%; }
.cells > * { border-left: 1px solid #c8c8c8; }
.user { width: 189px; padding: 0 14px 0 6px; gap: 9px; }
.uc { margin-left: auto; }
.c1 { width: 39px; }
.c2 { width: 69px; }
.nav { width: 74px; display: flex; align-items: center; padding-left: 8px; gap: 8px; color: #bbb; }
.views { width: 71px; display: flex; align-items: center; padding-left: 9px; gap: 12px; }
</style>
